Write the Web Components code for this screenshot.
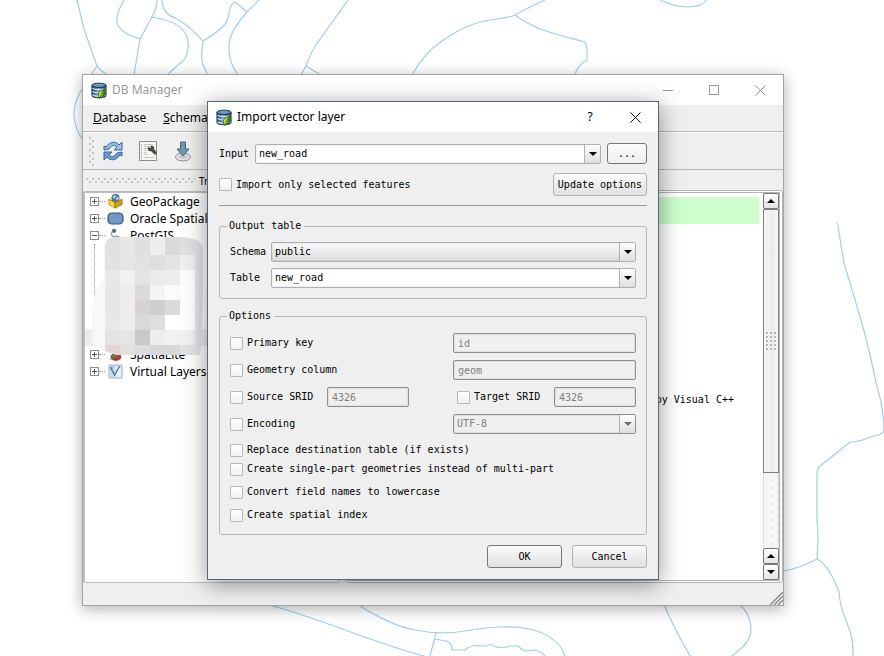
<!DOCTYPE html>
<html lang="en">
<head>
<meta charset="utf-8">
<title>DB Manager</title>
<style>
html,body{margin:0;height:100%}
body{background:#fff;color:#000;font:10px/14px "DejaVu Sans Mono","Liberation Mono",monospace;overflow:hidden}
</style>
</head>
<body>
<db-desktop></db-desktop>
<script>
const define=(name,markup,setup)=>{
  const t=document.createElement('template');
  t.innerHTML='<style>*{box-sizing:border-box}:host([hidden]){display:none}</style>'+markup;
  customElements.define(name,class extends HTMLElement{
    connectedCallback(){
      if(this.shadowRoot)return;
      const r=this.attachShadow({mode:'open'});
      r.append(t.content.cloneNode(true));
      if(setup)setup(this,r);
    }
  });
};

const icons={
  db:`<svg viewBox="0 0 17 17"><defs><linearGradient id="g"><stop stop-color="#1c3f70"/><stop offset=".45" stop-color="#86a9cf"/><stop offset="1" stop-color="#17365f"/></linearGradient></defs>
   <path d="M1 3v11c0 3 15 3 15 0V3z" fill="url(#g)" stroke="#14294a"/><ellipse cx="8.500" cy="3" rx="7.500" ry="2.300" fill="#7095c2" stroke="#14294a"/>
   <path d="M1.500 6c2 2 12 2 14 0M1.500 9.500c2 2 12 2 14 0M1.500 13c2 2 12 2 14 0" fill="none" stroke="#d5e2f0" stroke-width="1.200"/>
   <path d="M8 15c-1-5 2-7 5-7l2-2v4c0 4-3 6-5 5l-1 2z" fill="#c8da36" stroke="#284c16" stroke-width=".8"/><path d="M13 8l-3 7M14 7l1-2v6c0 2-1 4-3 5z" stroke="#357a21" fill="#357a21"/></svg>`,
  refresh:`<svg viewBox="0 0 20 20"><path d="M1 9V5l2 1c4-6 10-6 13-2l3-3v8h-8l3-3c-3-3-6-1-8 2z" fill="#9bbbe0" stroke="#3568a8"/><path d="M19 11v4l-2-1c-4 6-10 6-13 2l-3 3v-8h8l-3 3c3 3 6 1 8-2z" fill="#6c9bd2" stroke="#3568a8"/></svg>`,
  sql:`<svg viewBox="0 0 20 22"><path d="M1.500 1.500h17v19h-17z" fill="#f5f5f2" stroke="#8b8d88"/><path d="M6 4.500h9M6 6.500h6M6 8.500h4M6 10.500h3M6 12.500h3M6 14.500h4M6 17.500h10" stroke="#c4c4c0"/><path d="M3.500 4v15" stroke="#999" stroke-dasharray="1 1"/><path d="M10 7l2 1 1-1-1-1c3-1 5 1 4 3l3 4-2 2-4-4c-2 1-4-1-3-4z" fill="#4a4c4a"/></svg>`,
  import:`<svg viewBox="0 0 18 21"><ellipse cx="9" cy="16" rx="7.500" ry="4" fill="#e4e4e2" stroke="#8c8c8a"/><ellipse cx="9" cy="15.500" rx="4.500" ry="2" fill="#c8c9c8"/><path d="M6.500 1h5v7h3.500l-6 7-6-7h3.500z" fill="#7397ac" stroke="#41687f"/></svg>`,
  package:`<svg viewBox="0 0 17 17"><path d="M1 6l7 3v7l-7-4z" fill="#f6dc32" stroke="#9d7b0c" stroke-width=".8"/><path d="M16 6L8 9v7l8-4z" fill="#cfa21a" stroke="#866506" stroke-width=".8"/><path d="M1 6l3-2 5 4 7-2" fill="#fbef8a"/><circle cx="8.500" cy="4.500" r="4.300" fill="#5c7fa7" stroke="#2d4969" stroke-width=".7"/><path d="M5 3l3-2 1 2-2 2zM9 5l3-2 .5 2-2 2z" fill="#c1d2e4"/><path d="M1 6l7 4 8-4" fill="none" stroke="#b7930e"/></svg>`,
  oracle:`<svg viewBox="0 0 17 13"><rect x="1" y="1" width="15" height="11" rx="4" fill="#7198c8" stroke="#36506f" stroke-width="1.200"/></svg>`,
  postgis:`<svg viewBox="0 0 17 16"><circle cx="7" cy="3" r="2.300" fill="#47727a"/><path d="M5 4c-2 3 0 6 3 5s6 1 5 3-6 1-8 0" fill="none" stroke="#929caf" stroke-width="1.500"/><path d="M4 5v4" stroke="#aab3c2"/></svg>`,
  spatialite:`<svg viewBox="0 0 17 17"><path d="M1 14c4-3 8-4 14-1-3 3-9 3-14 1z" fill="#b7c0b0"/><ellipse cx="9" cy="11" rx="5.500" ry="4" fill="#c23b3a" stroke="#7d2424"/><path d="M4 10l3-3 2 3-3 4z" fill="#4d8b44"/></svg>`,
  virtual:`<svg viewBox="0 0 16 16"><path d="M1 1h14v14H1z" fill="#c8dbed" stroke="#9eb6ce"/><path d="M9 2h5v12H8z" fill="#e7f0f8"/><path d="M3 4l4 8 5-9" fill="none" stroke="#4d6687" stroke-width="1.300"/><path d="M2 3h3v2H2zM11 2h2v2h-2z" fill="#768ba5"/></svg>`,
  min:`<svg viewBox="0 0 11 11"><path d="M0 5.500h10" stroke="currentColor"/></svg>`,
  max:`<svg viewBox="0 0 11 11"><path d="M.5.5h9v9h-9z" fill="none" stroke="currentColor"/></svg>`,
  close:`<svg viewBox="0 0 11 11"><path d="M.5.5l10 10M10.500.5l-10 10" stroke="currentColor"/></svg>`,
  up:`<svg viewBox="0 0 8 4"><path d="M0 4l4-4 4 4z" fill="currentColor"/></svg>`,
  down:`<svg viewBox="0 0 8 4"><path d="M0 0h8L4 4z" fill="currentColor"/></svg>`
};
define('ui-icon','<style>:host{display:block;flex:none;width:16px;height:16px}span,svg{display:block;width:100%;height:100%}</style><span></span>',
  (h,r)=>{r.querySelector('span').innerHTML=icons[h.getAttribute('name')]||''});

define('road-map',`<style>:host{display:block;height:100%}svg{display:block;width:100%;height:100%}</style>
<svg viewBox="0 0 884 656" preserveAspectRatio="xMidYMid slice" fill="none" stroke="#9fcfe9" stroke-width="1.200">
<path d="M77 0L84 29L97 66Q101 72 109 75M97 66L91 75M83 88Q74 100 74 115Q75 130 83 140"/>
<path d="M124 0C117 12 115 20 118 26C123 33 130 35 140 39M157 0Q157 8 152 17L140 39L134 75"/>
<path d="M151 17C170 20 178 24 183 30C190 39 190 48 185 59L167 75"/>
<path d="M162 0C162 10 167 15 177 19C190 26 197 35 203 41C210 37 220 30 225 24C231 17 227 6 235 2L247 12M203 41C201 55 200 62 208 75"/>
<path d="M259 0L247 12C233 28 228 38 229 50C229 60 233 68 238 75"/>
<path d="M348 0L318 42Q312 50 306 66L301 75M306 66L321 75"/>
<path d="M412 75Q425 52 442 41C465 25 480 21 497 19Q508 18 515 15C528 8 536 4 545 0"/>
<path d="M515 15C535 30 555 34 585 42Q588 48 587 60C579 65 576 69 575 75"/>
<path d="M660 0Q675 7 687 7Q702 7 707 0"/>
<path d="M836 223Q838 223 839 232Q843 260 846 270C862 322 868 343 877 387Q884 410 884 430Q883 434 878 435C865 438 862 442 851 442C845 445 835 455 820 466Q817 468 817 475L817 520Q819 540 817 559Q800 568 784 571M817 559Q829 565 839 592Q840 605 844 615C852 635 853 640 853 656"/>
<path d="M664 605Q676 632 690 656M740 605C751 614 753 630 749 638C744 648 740 649 732 656"/>
<path d="M269 605C320 618 370 642 424 656M359 605C375 616 400 628 415 630C430 633 448 634 465 631C490 627 510 625 529 629C545 632 561 642 565 656M436 633L430 656"/>
<path d="M434 639L447 641Q452 643 452 650L465 650Q472 644 478 646L486 646Q491 643 494 646Q500 649 510 646L518 646Q522 650 525 651L535 650Q542 652 545 656"/>
</svg>`);

define('app-window',`<style>
:host{display:flex;flex-direction:column;background:#efefef;border:1px solid #a5a5a5;box-shadow:0 3px 14px rgba(0,0,0,.32)}
:host([active]){border-color:#58677a;box-shadow:0 4px 22px rgba(0,0,0,.42)}
header{display:flex;align-items:center;height:30px;background:#fff;color:#999;padding:0 17px 0 8px;font:12px/18px "Noto Sans","Open Sans",sans-serif;flex:none}
:host([active]) header{color:#000}
.logo{width:16px;height:17px}
h1{flex:1;margin:0 0 0 5px;font-size:12px;font-weight:400}
nav{display:flex;gap:34px}
:host([active]) nav{gap:33px}
button{display:grid;place-items:center;border:0;background:none;padding:0;margin:0;color:inherit;width:12px;height:18px;font:inherit}
button ui-icon{width:11px;height:11px}
.body{flex:1;min-height:0;display:flex;flex-direction:column}
</style>
<header><ui-icon class="logo" name="db"></ui-icon><h1></h1><nav></nav></header><div class="body"><slot></slot></div>`,
(h,r)=>{
  r.querySelector('h1').textContent=h.getAttribute('caption');
  r.querySelector('nav').innerHTML=h.hasAttribute('active')
   ?'<button>?</button><button aria-label="Close"><ui-icon name="close"></ui-icon></button>'
   :'<button aria-label="Minimize"><ui-icon name="min"></ui-icon></button><button aria-label="Maximize"><ui-icon name="max"></ui-icon></button><button aria-label="Close"><ui-icon name="close"></ui-icon></button>';
});

define('menu-bar',`<style>:host{display:flex;height:27px;flex:none;align-items:center;gap:17px;padding-left:10px;border-bottom:1px solid #b7b7b7}
button{border:0;background:none;padding:0;font:12px/18px "Noto Sans","Open Sans",sans-serif;color:#000}</style>
<button><u>D</u>atabase</button><button><u>S</u>chema</button>`);

define('tool-bar',`<style>:host{display:flex;height:38px;flex:none;align-items:center;gap:15px;padding-left:6px;border-top:1px solid #fff;border-bottom:1px solid #b7b7b7}
i{width:6px;height:29px;margin-right:-7px;background:radial-gradient(circle at 1px 1px,#c4c4c4 1px,transparent 1px) 0 0/6px 6px,radial-gradient(circle at 1px 1px,#c4c4c4 1px,transparent 1px) 3px 3px/6px 6px}
button{border:0;background:none;padding:0;width:20px;height:22px;display:grid;place-items:center}
ui-icon{width:20px;height:20px}.s{height:22px}.m{width:18px;height:21px}</style>
<i></i><button aria-label="Refresh"><ui-icon name="refresh"></ui-icon></button><button aria-label="SQL window"><ui-icon class="s" name="sql"></ui-icon></button><button aria-label="Import layer"><ui-icon class="m" name="import"></ui-icon></button>`);

define('tree-item',`<style>:host{display:flex;align-items:center;height:17px;font:12px/17px "Noto Sans","Open Sans",sans-serif;white-space:nowrap;padding-left:5px}
button{width:9px;height:9px;padding:0;border:1px solid #8c8c8c;background:linear-gradient(#555,#555) center/5px 1px no-repeat,#fff;flex:none}
:host(:not([open])) button{background:linear-gradient(#555,#555) center/5px 1px no-repeat,linear-gradient(#555,#555) center/1px 5px no-repeat,#fff}
i{width:6px;border-top:1px dotted #999;margin-right:2px}
ui-icon{width:17px;height:15px;margin-right:6px}</style>
<button aria-label="Toggle"></button><i></i><ui-icon></ui-icon><slot></slot>`,
(h,r)=>{const o=r.querySelector('ui-icon'),n=document.createElement('ui-icon');n.setAttribute('name',h.getAttribute('icon'));o.replaceWith(n)});

define('pixel-mosaic',`<style>:host{display:block}svg{display:block}</style>
<svg width="123" height="124" viewBox="85 236 123 124"><defs><clipPath id="c"><path d="M115 237H180Q203 237 203 251V285L201 345L200 355H117L105 351L92 342Q90 285 104 280V248Q106 237 115 237Z"/></clipPath></defs>
<path d="M85 329H207V346H85Z" fill="#ededed"/><g clip-path="url(#c)"><path d="M85 236H208V360H85Z" fill="#f8f8f8"/><path d="M193 236H204V360H193Z" fill="#e2e4e7"/><g id="cells"></g></g></svg>`,
(h,r)=>{
  const rows=['e0e0e2 e9e7e6 dedfe2 eeeeee dadadd e0e0e2','e2e2e3 e5e5e7 e2e2e5 dedede e3e3e4 f0f0f0','e8e8e9 f3f0ee e4e4e7 eaecec ebeded fdfdfd','e7e7e8 ececec dadadb f4f4f4 fbfbfb ffffff','e7e7e7 eeedeb d7d1d5 cececf dadadd fdfdfd','e8e8e8 ededee d9d9da dededf ffffff ffffff','e3e3e5 e5e5e6 c8c9cc eeeeef f1f1f2 f1f1f1','e2d7d4 e2e1df dddddf d7d8dc d8d8d8 e2e2e5'];
  const tops=[236,255,270,285,300,315,330,345];
  r.querySelector('#cells').innerHTML=rows.map((row,j)=>row.split(' ').map((c,i)=>`<path d="M${105+i*15} ${tops[j]}h15v${j?15:19}h-15z" fill="#${c}"/>`).join('')).join('');
});

define('tree-dock',`<style>:host{display:flex;flex-direction:column;min-width:0}
header{display:flex;align-items:center;height:21px;flex:none;padding-left:3px;white-space:nowrap;font:10px/14px "Noto Sans",sans-serif}
header i{width:109px;height:5px;margin-right:4px;background:radial-gradient(circle at 1px 1px,#c4c4c4 1px,transparent 1px) 0 0/6px 6px,radial-gradient(circle at 1px 1px,#c4c4c4 1px,transparent 1px) 3px 3px/6px 6px}
.tree{position:relative;flex:1;background:#fff;border:2px solid #bdbdbd;border-width:2px 1px 1px 2px;border-radius:2px}
.gap{height:102px;border-left:1px dotted #999;margin-left:9px}
pixel-mosaic{position:absolute;left:0;top:43px}
</style><header><i></i>Tree</header><div class="tree">
<tree-item icon="package">GeoPackage</tree-item><tree-item icon="oracle">Oracle Spatial</tree-item><tree-item icon="postgis" open>PostGIS</tree-item>
<div class="gap"></div>
<tree-item icon="spatialite">SpatiaLite</tree-item><tree-item icon="virtual">Virtual Layers</tree-item>
<pixel-mosaic></pixel-mosaic></div>`);

define('scroll-strip',`<style>:host{display:flex;flex-direction:column;width:16px;background:repeating-conic-gradient(#ededed 0 25%,#fff 0 50%) 0 0/2px 2px;border:1px dotted #c4c4c4;border-width:0 1px}
button{height:16px;flex:none;margin:0 -1px;padding:0;border:1px solid #777;border-radius:2px;background:linear-gradient(#fff,#e4e4e4);display:grid;place-items:center;color:#000}
button ui-icon{width:8px;height:4px}
.thumb{flex:264;display:grid;place-items:center;margin:0 -1px;border:1px solid #808080;background:linear-gradient(90deg,#f6f6f6,#ebebeb 60%,#fafafa)}
.thumb i{width:11px;height:19px;background:radial-gradient(circle at 1px 1px,#b5b5b5 1px,transparent 1px) 0 0/4px 4px}
.rest{flex:75}</style>
<button aria-label="Scroll up"><ui-icon name="up"></ui-icon></button><div class="thumb"><i></i></div><div class="rest"></div>
<button aria-label="Scroll up"><ui-icon name="up"></ui-icon></button><button aria-label="Scroll down"><ui-icon name="down"></ui-icon></button>`);

define('info-view',`<style>:host{display:flex;gap:4px;min-width:0;margin-top:20px;background:#fff;border:3px double #b4b4b4;border-width:3px 4px 3px 3px;border-radius:3px}
.page{flex:1;min-width:0;padding-top:4px}
.ok{height:27px;background:#cfc}
p{margin:169px 25px 0 0;text-align:right}</style>
<div class="page"><div class="ok"></div><p>by Visual C++</p></div><scroll-strip></scroll-strip>`);

define('workspace-area',`<style>:host{flex:1;min-height:0;display:grid;grid-template-columns:minmax(0,256fr) 7px minmax(0,438fr);grid-template-rows:minmax(0,1fr)}
info-view{grid-column:3}</style><tree-dock></tree-dock><info-view></info-view>`);

define('status-strip',`<style>:host{display:flex;justify-content:flex-end;align-items:flex-end;height:22px;flex:none}svg{display:block}</style>
<svg width="13" height="13"><path d="M0 13L13 0M4 13L13 4M8 13L13 8" stroke="#8c8c8c" stroke-width="1.500"/></svg>`);

define('combo-box',`<style>:host{display:block;min-width:0}
label{display:flex;align-items:center}
span{flex:none;width:var(--label,0)}
.box{position:relative;flex:1;min-width:0}
select{display:block;width:100%;height:20px;margin:0;appearance:none;border:1px solid #b0b0b0;border-radius:2px;padding:0 20px 0 3px;font:inherit;color:#000;background:#fff;box-shadow:inset 0 0 0 1px rgba(0,0,0,.06)}
:host([plain]) select{background:linear-gradient(#fafafa,#dcdcdc)}
select:disabled{color:#808080;background:#efefef;opacity:1;border-color:#8f8f8f}
.arrow{position:absolute;right:1px;top:1px;bottom:1px;width:16px;border-left:1px solid #b0b0b0;background:linear-gradient(#fdfdfd,#dedede);display:grid;place-items:center;pointer-events:none}
.arrow ui-icon{width:8px;height:4px}
:host([off]) .arrow{color:#707070}
</style><label><span></span><div class="box"><select><option></option></select><div class="arrow"><ui-icon name="down"></ui-icon></div></div></label>`,
(h,r)=>{
  r.querySelector('option').textContent=h.getAttribute('value');
  if(h.hasAttribute('label'))r.querySelector('span').textContent=h.getAttribute('label');
  const s=r.querySelector('select');
  if(h.hasAttribute('name'))s.setAttribute('aria-label',h.getAttribute('name'));
  s.disabled=h.hasAttribute('off');
});

define('text-field',`<style>:host{display:block;min-width:0}input{display:block;width:100%;height:20px;margin:0;border:1px solid #8f8f8f;border-radius:2px;background:#efefef;color:#808080;font:inherit;padding:1px 4px 0;box-shadow:inset 0 0 0 1px rgba(0,0,0,.06)}</style><input disabled>`,
(h,r)=>{const i=r.querySelector('input');i.value=h.getAttribute('value');i.setAttribute('aria-label',h.getAttribute('name'))});

define('check-item',`<style>:host{display:block;white-space:nowrap}label{display:flex;align-items:center;gap:4px}
input{appearance:none;width:13px;height:13px;margin:0;flex:none;border:1px solid #b9b9b9;border-radius:1px;background:linear-gradient(#fff,#f1f1f1)}
input:checked{background:#567}</style><label><input type="checkbox"><span><slot></slot></span></label>`);

define('push-button',`<style>:host{display:block;flex:none}button{display:block;width:100%;height:23px;margin:0;padding:0;white-space:nowrap;font:inherit;color:#000;border:1px solid #b2b2b2;border-radius:3px;background:linear-gradient(#fbfbfb,#e0e0e0)}
:host([strong]) button{border-color:#777}:host([small]) button{height:21px;background:linear-gradient(#fcfcfc,#efefef)}</style><button><slot></slot></button>`);

define('group-box',`<style>:host{display:block}fieldset{margin:0;min-width:0;border:1px solid #b7b7b7;border-radius:3px;padding:9px 10px 10px}
legend{margin-left:-3px;padding:0 3px 0 2px;line-height:14px}</style><fieldset><legend></legend><slot></slot></fieldset>`,
(h,r)=>{r.querySelector('legend').textContent=h.getAttribute('label')});

define('import-form',`<style>
:host{display:block;padding:11px}
.row{display:flex;align-items:center}
.source{gap:6px}.source combo-box{flex:1;--label:36px}.source push-button{width:40px}
.filter{justify-content:space-between;margin-top:9px}.filter push-button{width:94px}
hr{margin:9px 0 13px;border:0;border-top:1px solid #969696}
.target{display:grid;gap:6px;--label:41px}
.opts{margin-top:10px}
.grid{display:grid;grid-template-columns:97px minmax(0,82fr) 44px minmax(0,183fr);gap:7px 0;align-items:center;padding-top:1px}
.wide{grid-column:1/4}
.srid{padding-left:4px;justify-content:space-between}.srid text-field{width:82px}
.last{grid-column:4}
.flags{margin:6px 0 -2px}
.flags check-item{padding:3px 0 2px}
.flags .airy{padding:5px 0 4px}
.flags .first{margin-top:2px}
.actions{justify-content:flex-end;gap:10px;margin-top:10px}.actions push-button{width:75px}
</style>
<div class="row source"><combo-box label="Input" value="new_road"></combo-box><push-button small strong>...</push-button></div>
<div class="row filter"><check-item>Import only selected features</check-item><push-button>Update options</push-button></div>
<hr>
<group-box label="Output table"><div class="target"><combo-box plain label="Schema" value="public"></combo-box><combo-box label="Table" value="new_road"></combo-box></div></group-box>
<group-box class="opts" label="Options">
<div class="grid">
<check-item class="wide">Primary key</check-item><text-field class="last" name="Primary key" value="id"></text-field>
<check-item class="wide">Geometry column</check-item><text-field class="last" name="Geometry column" value="geom"></text-field>
<check-item>Source SRID</check-item><text-field name="Source SRID" value="4326"></text-field>
<div class="row srid last"><check-item>Target SRID</check-item><text-field name="Target SRID" value="4326"></text-field></div>
<check-item class="wide">Encoding</check-item><combo-box class="last" off name="Encoding" value="UTF-8"></combo-box>
</div>
<div class="flags"><check-item>Replace destination table (if exists)</check-item><check-item>Create single-part geometries instead of multi-part</check-item>
<check-item class="airy first">Convert field names to lowercase</check-item><check-item class="airy">Create spatial index</check-item></div>
</group-box>
<div class="row actions"><push-button strong>OK</push-button><push-button>Cancel</push-button></div>`);

define('db-desktop',`<style>:host{display:block;position:relative;height:100vh;overflow:hidden}
.main{position:absolute;inset:74px 100px 50px 82px}
.dialog{position:absolute;top:101px;left:207px;right:225px}</style>
<road-map></road-map>
<app-window class="main" caption="DB Manager"><menu-bar></menu-bar><tool-bar></tool-bar><workspace-area></workspace-area><status-strip></status-strip></app-window>
<app-window class="dialog" active caption="Import vector layer"><import-form></import-form></app-window>`);
</script>
</body>
</html>
